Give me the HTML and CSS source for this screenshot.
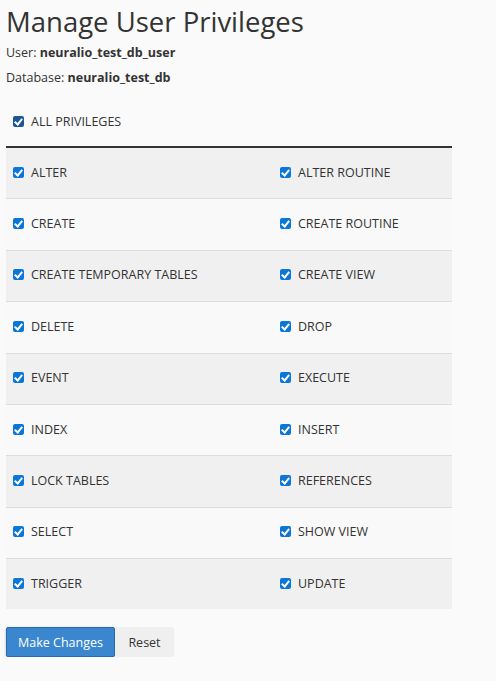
FILE: index.html
```html
<!DOCTYPE html>
<html>
<head>
<meta charset="utf-8">
<link rel="stylesheet" href="styles.css">
</head>
<body>
<div class="page">
  <h1 class="title">Manage User Privileges</h1>
  <p class="meta">User: <b>neuralio_test_db_user</b></p>
  <p class="meta">Database: <b>neuralio_test_db</b></p>
  <label class="all"><span class="cb dark"></span>ALL PRIVILEGES</label>
  <div class="table">
    <div class="row odd"><label class="cell"><span class="cb"></span>ALTER</label><label class="cell"><span class="cb"></span>ALTER ROUTINE</label></div>
    <div class="row"><label class="cell"><span class="cb"></span>CREATE</label><label class="cell"><span class="cb"></span>CREATE ROUTINE</label></div>
    <div class="row odd"><label class="cell"><span class="cb"></span>CREATE TEMPORARY TABLES</label><label class="cell"><span class="cb"></span>CREATE VIEW</label></div>
    <div class="row"><label class="cell"><span class="cb"></span>DELETE</label><label class="cell"><span class="cb"></span>DROP</label></div>
    <div class="row odd"><label class="cell"><span class="cb"></span>EVENT</label><label class="cell"><span class="cb"></span>EXECUTE</label></div>
    <div class="row"><label class="cell"><span class="cb"></span>INDEX</label><label class="cell"><span class="cb"></span>INSERT</label></div>
    <div class="row odd"><label class="cell"><span class="cb"></span>LOCK TABLES</label><label class="cell"><span class="cb"></span>REFERENCES</label></div>
    <div class="row"><label class="cell"><span class="cb"></span>SELECT</label><label class="cell"><span class="cb"></span>SHOW VIEW</label></div>
    <div class="row odd"><label class="cell"><span class="cb"></span>TRIGGER</label><label class="cell"><span class="cb"></span>UPDATE</label></div>
  </div>
  <div class="actions">
    <button class="btn primary">Make Changes</button><button class="btn plain">Reset</button>
  </div>
</div>
</body>
</html>
```
FILE: styles.css
```css
html, body { margin: 0; padding: 0; background: #fafafa; }
body { font-family: "Open Sans", sans-serif; color: #333; font-size: 12.5px; }
.page { padding: 0 6px; width: 446px; }
.title { font-size: 27.5px; font-weight: 400; margin: 4px 0 0 0; line-height: 36px; color: #333; }
.meta { margin: 0; line-height: 25px; font-size: 12.5px; }
.meta b { font-weight: 700; }
.all { display: flex; align-items: center; margin-top: 16px; height: 30px; padding-left: 7px; }
.cb { display: inline-block; width: 11px; height: 11px; border-radius: 2px; background: #0a76d8; margin-right: 7px; position: relative; flex: none; }
.cb.dark { background: #1b5796; }
.cb::after { content: ""; position: absolute; left: 3px; top: 1px; width: 3px; height: 6px; border: solid #fff; border-width: 0 2px 2px 0; transform: rotate(40deg); }
.table { margin-top: 10px; border-top: 2px solid #333; }
.row { display: grid; grid-template-columns: 267px 1fr; height: 50.375px; border-top: 1px solid #ddd; background: #f9f9f9; }
.row:first-child { border-top: 0; }
.row.odd { background: #f0f0f0; }
.cell { display: flex; align-items: center; padding-left: 7px; padding-bottom: 2px; }
.actions { margin-top: 18px; display: flex; }
.btn { font-family: "Open Sans", sans-serif; font-size: 12.5px; height: 30px; padding: 0; border: 1px solid transparent; border-radius: 2px; cursor: pointer; white-space: nowrap; }
.primary { background: #3a87cf; color: #fff; border-color: #2a6aa8; box-shadow: 0 1px 3px rgba(0,0,0,0.25); width: 109px; }
.plain { background: #efefef; color: #333; width: 59px; border-radius: 0 2px 2px 0; }
```
